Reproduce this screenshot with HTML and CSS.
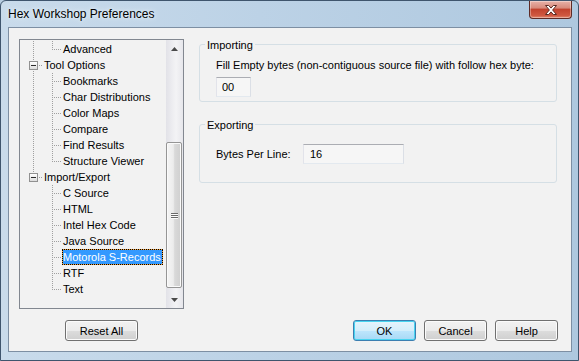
FILE: index.html
```html
<!DOCTYPE html>
<html>
<head>
<meta charset="utf-8">
<title>Hex Workshop Preferences</title>
<link rel="stylesheet" href="styles.css">
</head>
<body>
<div class="window">
  <div class="titlebar">
    <span class="title">Hex Workshop Preferences</span>
    <div class="close">
      <svg width="18" height="12" viewBox="0 0 18 12"><path d="M3.5 1.5h3.2l2.3 2.6 2.3-2.6h3.2l-3.9 4.5 3.9 4.5h-3.2L9 7.9l-2.3 2.6H3.5l3.9-4.5z" fill="#ffffff" stroke="#5a2a22" stroke-width="1"/></svg>
    </div>
  </div>
  <div class="client">
    <div class="tree">
      <div class="tree-rows">
        <div class="row"><span class="g v"></span><span class="g l"></span><span class="lbl">Advanced</span></div>
        <div class="row"><span class="g t"><span class="exp"><span class="minus"></span></span></span><span class="lbl">Tool Options</span></div>
        <div class="row"><span class="g v"></span><span class="g t"></span><span class="lbl">Bookmarks</span></div>
        <div class="row"><span class="g v"></span><span class="g t"></span><span class="lbl">Char Distributions</span></div>
        <div class="row"><span class="g v"></span><span class="g t"></span><span class="lbl">Color Maps</span></div>
        <div class="row"><span class="g v"></span><span class="g t"></span><span class="lbl">Compare</span></div>
        <div class="row"><span class="g v"></span><span class="g t"></span><span class="lbl">Find Results</span></div>
        <div class="row"><span class="g v"></span><span class="g l"></span><span class="lbl">Structure Viewer</span></div>
        <div class="row"><span class="g l"><span class="exp"><span class="minus"></span></span></span><span class="lbl">Import/Export</span></div>
        <div class="row"><span class="g"></span><span class="g t"></span><span class="lbl">C Source</span></div>
        <div class="row"><span class="g"></span><span class="g t"></span><span class="lbl">HTML</span></div>
        <div class="row"><span class="g"></span><span class="g t"></span><span class="lbl">Intel Hex Code</span></div>
        <div class="row"><span class="g"></span><span class="g t"></span><span class="lbl">Java Source</span></div>
        <div class="row"><span class="g"></span><span class="g t"></span><span class="lbl selected">Motorola S-Records</span></div>
        <div class="row"><span class="g"></span><span class="g t"></span><span class="lbl">RTF</span></div>
        <div class="row"><span class="g"></span><span class="g l"></span><span class="lbl">Text</span></div>
      </div>
      <div class="scrollbar">
        <div class="sb-btn"><svg width="7" height="4" viewBox="0 0 7 4"><path d="M3.5 0L7 4H0z" fill="#4a4a4a"/></svg></div>
        <div class="sb-track">
          <div class="sb-space"></div>
          <div class="sb-thumb"><span class="grip"></span><span class="grip"></span><span class="grip"></span></div>
        </div>
        <div class="sb-btn"><svg width="7" height="4" viewBox="0 0 7 4"><path d="M0 0h7L3.5 4z" fill="#4a4a4a"/></svg></div>
      </div>
    </div>
    <div class="panel">
      <fieldset class="group">
        <legend>Importing</legend>
        <div class="group-body import-body">
          <span class="text">Fill Empty bytes (non-contiguous source file) with follow hex byte:</span>
          <input class="field field-hex" type="text" value="00">
        </div>
      </fieldset>
      <fieldset class="group">
        <legend>Exporting</legend>
        <div class="group-body export-body">
          <span class="text label">Bytes Per Line:</span>
          <input class="field field-bpl" type="text" value="16">
        </div>
      </fieldset>
    </div>
    <div class="left-actions"><button class="btn btn-reset">Reset All</button></div>
    <div class="right-actions">
      <button class="btn default">OK</button>
      <button class="btn">Cancel</button>
      <button class="btn">Help</button>
    </div>
  </div>
</div>
</body>
</html>
```
FILE: styles.css
```css
html, body {
  margin: 0;
  padding: 0;
  background: #b7cde1;
}
body {
  font-family: "Liberation Sans", Arial, sans-serif;
  font-size: 11px;
  color: #000;
}
.window {
  width: 579px;
  height: 361px;
  box-sizing: border-box;
  border: 1px solid #3f556d;
  border-radius: 6px 6px 0 0;
  background: linear-gradient(to right, #c9dbeb 0%, #bcd2e6 45%, #aec8df 100%);
  display: flex;
  flex-direction: column;
}
.titlebar {
  height: 27px;
  display: flex;
  justify-content: space-between;
  align-items: flex-start;
  padding-left: 7px;
}
.title {
  font-size: 12px;
  line-height: 14px;
  margin-top: 6px;
  color: #000;
  text-shadow: 0 0 6px #e8f1f8, 0 0 3px #e8f1f8;
}
.close {
  width: 43px;
  height: 18px;
  margin-right: 6px;
  box-sizing: border-box;
  border: 1px solid #5e2b26;
  border-top: none;
  border-radius: 0 0 4px 4px;
  background: linear-gradient(to bottom, #e8b2a8 0%, #d88b7c 40%, #c2432e 50%, #cf5840 85%, #e28a70 100%);
  display: flex;
  align-items: center;
  justify-content: center;
  box-shadow: inset 0 0 0 1px rgba(255,255,255,0.35);
}
.client {
  flex: 1;
  margin: 0 6px 8px 7px;
  border: 1px solid #7d8fa3;
  background: #f2f2f2;
  display: grid;
  grid-template-columns: 165px 1fr;
  grid-template-rows: 1fr 21px;
  column-gap: 15px;
  row-gap: 11px;
  padding: 10px 14px 10px 10px;
}
.tree {
  margin-top: 1px;
  height: 270px;
  box-sizing: border-box;
  border: 1px solid #828790;
  background: #f2f2f2;
  display: flex;
}
.tree-rows {
  flex: 1;
  padding: 1px 0 0 4px;
  overflow: hidden;
}
.row {
  display: flex;
  height: 16px;
}
.g {
  width: 19px;
  height: 16px;
  flex: none;
  display: flex;
  align-items: flex-start;
  background-repeat: no-repeat;
}
.g.v {
  background-image: repeating-linear-gradient(to bottom, #a0a0a0 0 1px, transparent 1px 2px);
  background-size: 1px 16px;
  background-position: 9px 0;
}
.g.t {
  background-image:
    repeating-linear-gradient(to bottom, #a0a0a0 0 1px, transparent 1px 2px),
    repeating-linear-gradient(to right, #a0a0a0 0 1px, transparent 1px 2px);
  background-size: 1px 16px, 9px 1px;
  background-position: 9px 0, 11px 8px;
}
.g.l {
  background-image:
    repeating-linear-gradient(to bottom, #a0a0a0 0 1px, transparent 1px 2px),
    repeating-linear-gradient(to right, #a0a0a0 0 1px, transparent 1px 2px);
  background-size: 1px 9px, 9px 1px;
  background-position: 9px 0, 11px 8px;
}
.exp {
  width: 9px;
  height: 9px;
  box-sizing: border-box;
  margin: 4px 0 0 5px;
  border: 1px solid #919191;
  background: linear-gradient(to bottom, #ffffff, #dcdcdc);
  display: flex;
  align-items: center;
  justify-content: center;
}
.minus {
  width: 5px;
  height: 1px;
  background: #2b2b2b;
}
.lbl {
  height: 16px;
  line-height: 16px;
  padding: 0 2px 0 1px;
  white-space: nowrap;
  box-sizing: border-box;
}
.lbl.selected {
  background: #3399ff;
  color: #fff;
  border: 1px solid #f2a03a;
  outline: 1px dotted #000;
  outline-offset: -1px;
  line-height: 14px;
  padding: 0 1px 0 0;
}
.scrollbar {
  width: 17px;
  flex: none;
  display: flex;
  flex-direction: column;
  background: linear-gradient(to right, #e2e2e8 0%, #efeff2 45%, #f3f3f5 60%, #e6e6eb 100%);
}
.sb-btn {
  height: 17px;
  flex: none;
  display: flex;
  align-items: center;
  justify-content: center;
}
.sb-track {
  flex: 1;
  display: flex;
  flex-direction: column;
}
.sb-space {
  height: 85px;
  flex: none;
}
.sb-thumb {
  height: 146px;
  box-sizing: border-box;
  margin: 0 1px 0 0;
  border: 1px solid #959595;
  border-radius: 2px;
  background: linear-gradient(to right, #f5f5f5 0%, #ececec 45%, #d9d9d9 55%, #cfcfcf 100%);
  box-shadow: inset 0 0 0 1px #fafafa;
  display: flex;
  flex-direction: column;
  align-items: center;
  justify-content: center;
  gap: 1px;
}
.grip {
  width: 7px;
  height: 1px;
  background: #6a6a6a;
  box-shadow: 0 1px 0 #fcfcfc;
}
.panel {
  display: flex;
  flex-direction: column;
  gap: 14px;
  margin-top: -2px;
}
.group {
  margin: 0;
  padding: 0;
  border: 1px solid #d5dfe5;
  border-radius: 3px;
  min-width: 0;
}
.group legend {
  margin-left: 5px;
  padding: 3px 2px 0;
  line-height: 13px;
}
.group-body {
  padding-left: 16px;
}
.text {
  line-height: 13px;
}
.import-body {
  display: flex;
  flex-direction: column;
  align-items: flex-start;
  padding-top: 7px;
  padding-bottom: 4px;
  gap: 5px;
}
.export-body {
  display: flex;
  align-items: center;
  padding-top: 12px;
  padding-bottom: 18px;
}
.label {
  width: 87px;
  flex: none;
}
.field {
  box-sizing: border-box;
  height: 20px;
  margin: 0;
  font-family: "Liberation Sans", Arial, sans-serif;
  font-size: 11px;
  color: #000;
  background: #f6f6f6;
  border: 1px solid;
  border-color: #abadb3 #dbdfe6 #e3e9ef #e2e3ea;
  outline: none;
}
.field-hex {
  width: 35px;
  padding: 0 0 0 5px;
}
.field-bpl {
  width: 101px;
  padding: 0 0 0 6px;
}
.left-actions {
  display: flex;
  justify-content: center;
}
.right-actions {
  display: flex;
  justify-content: flex-end;
  gap: 8px;
  margin-right: -1px;
}
.btn {
  height: 21px;
  width: 63px;
  margin: 0;
  padding: 0;
  box-sizing: border-box;
  font-family: "Liberation Sans", Arial, sans-serif;
  font-size: 11px;
  color: #000;
  border: 1px solid #707070;
  border-radius: 3px;
  background: linear-gradient(to bottom, #f2f2f2 0%, #ebebeb 50%, #dddddd 50%, #cfcfcf 100%);
  box-shadow: inset 0 0 0 1px #fbfbfb;
}
.btn-reset {
  width: 73px;
}
.btn.default {
  border-color: #3c7fb1;
  background: linear-gradient(to bottom, #e5f4fc 0%, #d4eefb 50%, #bee6fd 50%, #a7d9f5 100%);
  box-shadow: inset 0 0 0 1px #48d4f0;
}
```
